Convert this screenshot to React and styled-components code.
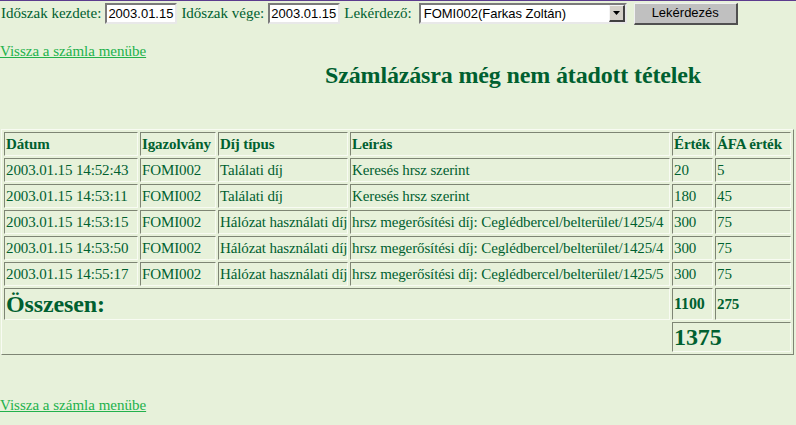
import React from "react";
import styled, { createGlobalStyle } from "styled-components";

const GlobalStyle = createGlobalStyle`
  body {
    margin: 0;
    background: #e7f1da;
    border-top: 1px solid #5c3c8e;
    font-family: "Liberation Serif", "Times New Roman", serif;
    color: #006030;
    font-size: 16px;
  }
`;

const FilterRow = styled.form`
  display: flex;
  align-items: center;
  gap: 4px;
  height: 25px;
  padding-left: 1px;
  font-size: 15px;
`;

const Label = styled.span`
  white-space: nowrap;
`;

const DateInput = styled.input`
  box-sizing: border-box;
  width: 72px;
  height: 21px;
  padding: 0 1px;
  background: #fff;
  color: #000;
  font-family: "Liberation Sans", Arial, sans-serif;
  font-size: 13px;
  border-style: solid;
  border-width: 2px;
  border-color: #7a7a7a #e8e8e8 #e8e8e8 #7a7a7a;
  outline: none;
`;

const SelectBox = styled.div`
  box-sizing: border-box;
  display: flex;
  align-items: center;
  width: 208px;
  height: 21px;
  margin-left: 3px;
  background: #fff;
  border-style: solid;
  border-width: 2px;
  border-color: #7a7a7a #e8e8e8 #e8e8e8 #7a7a7a;
  font-family: "Liberation Sans", Arial, sans-serif;
  font-size: 13px;
  color: #000;
`;

const SelectValue = styled.span`
  flex: 1;
  padding-left: 3px;
  white-space: nowrap;
`;

const ArrowButton = styled.span`
  box-sizing: border-box;
  display: flex;
  align-items: center;
  justify-content: center;
  width: 16px;
  height: 17px;
  background: #d4d0c8;
  border-style: solid;
  border-width: 1px 2px 2px 1px;
  border-color: #f4f4f4 #404040 #404040 #f4f4f4;
`;

const Button = styled.button`
  box-sizing: border-box;
  width: 104px;
  height: 22px;
  margin-left: 3px;
  padding: 0 0 2px;
  background: #c0c0c0;
  color: #000;
  font-family: "Liberation Sans", Arial, sans-serif;
  font-size: 13px;
  border-style: solid;
  border-width: 1px 2px 2px 1px;
  border-color: #f0f0f0 #505050 #505050 #f0f0f0;
`;

const BackLink = styled.a`
  display: block;
  width: max-content;
  margin-top: ${p => p.$top}px;
  font-size: 15px;
  line-height: 18px;
  color: #22b14c;
  text-decoration: underline;
`;

const Title = styled.h1`
  margin: 1px 0 0 325px;
  font-size: 24px;
  line-height: 28px;
  font-weight: bold;
  letter-spacing: -0.15px;
  color: #006030;
`;

const Table = styled.table`
  margin: 40px 0 0 1px;
  width: 793px;
  table-layout: fixed;
  border-spacing: 2px;
  border-style: solid;
  border-width: 1px;
  border-color: #f8fbf2 #7e8574 #7e8574 #f8fbf2;
`;

const Cell = styled.td`
  padding: 1px;
  line-height: ${p => (p.$h ? p.$h : 20)}px;
  font-size: ${p => (p.$size ? p.$size : 15)}px;
  font-weight: ${p => (p.$bold ? "bold" : "normal")};
  letter-spacing: -0.12px;
  text-align: left;
  vertical-align: middle;
  white-space: nowrap;
  overflow: hidden;
  border-style: solid;
  border-width: 1px;
  border-color: #7e8574 #f8fbf2 #f8fbf2 #7e8574;
`;

const EmptyCell = styled.td`
  padding: 0;
`;

const cols = [134, 76, 130, 320, 41, 76];
const heads = ["Dátum", "Igazolvány", "Díj típus", "Leírás", "Érték", "ÁFA érték"];

const rows = [
  ["2003.01.15 14:52:43", "FOMI002", "Találati díj", "Keresés hrsz szerint", "20", "5"],
  ["2003.01.15 14:53:11", "FOMI002", "Találati díj", "Keresés hrsz szerint", "180", "45"],
  ["2003.01.15 14:53:15", "FOMI002", "Hálózat használati díj", "hrsz megerősítési díj: Ceglédbercel/belterület/1425/4", "300", "75"],
  ["2003.01.15 14:53:50", "FOMI002", "Hálózat használati díj", "hrsz megerősítési díj: Ceglédbercel/belterület/1425/4", "300", "75"],
  ["2003.01.15 14:55:17", "FOMI002", "Hálózat használati díj", "hrsz megerősítési díj: Ceglédbercel/belterület/1425/5", "300", "75"],
];

export default function App() {
  return (
    <>
      <GlobalStyle />
      <FilterRow onSubmit={e => e.preventDefault()}>
        <Label>Időszak kezdete:</Label>
        <DateInput defaultValue="2003.01.15" />
        <Label>Időszak vége:</Label>
        <DateInput defaultValue="2003.01.15" />
        <Label>Lekérdező:</Label>
        <SelectBox>
          <SelectValue>FOMI002(Farkas Zoltán)</SelectValue>
          <ArrowButton>
            <svg width="7" height="4" viewBox="0 0 7 4">
              <path d="M0 0h7L3.5 4z" fill="#000" />
            </svg>
          </ArrowButton>
        </SelectBox>
        <Button type="submit">Lekérdezés</Button>
      </FilterRow>

      <BackLink href="#" $top={16}>Vissza a számla menübe</BackLink>
      <Title>Számlázásra még nem átadott tételek</Title>

      <Table>
        <colgroup>
          {cols.map((w, i) => (
            <col key={i} style={{ width: w }} />
          ))}
        </colgroup>
        <tbody>
          <tr>
            {heads.map(h => (
              <Cell as="th" key={h} $bold>{h}</Cell>
            ))}
          </tr>
          {rows.map((r, i) => (
            <tr key={i}>
              {r.map((c, j) => (
                <Cell key={j}>{c}</Cell>
              ))}
            </tr>
          ))}
          <tr>
            <Cell colSpan={4} $bold $size={24} $h={28}>Összesen:</Cell>
            <Cell $bold $size={16} $h={28}>1100</Cell>
            <Cell $bold $size={15} $h={28}>275</Cell>
          </tr>
          <tr>
            <EmptyCell colSpan={4} />
            <Cell colSpan={2} $bold $size={24} $h={26}>1375</Cell>
          </tr>
        </tbody>
      </Table>

      <BackLink href="#" $top={41}>Vissza a számla menübe</BackLink>
    </>
  );
}
